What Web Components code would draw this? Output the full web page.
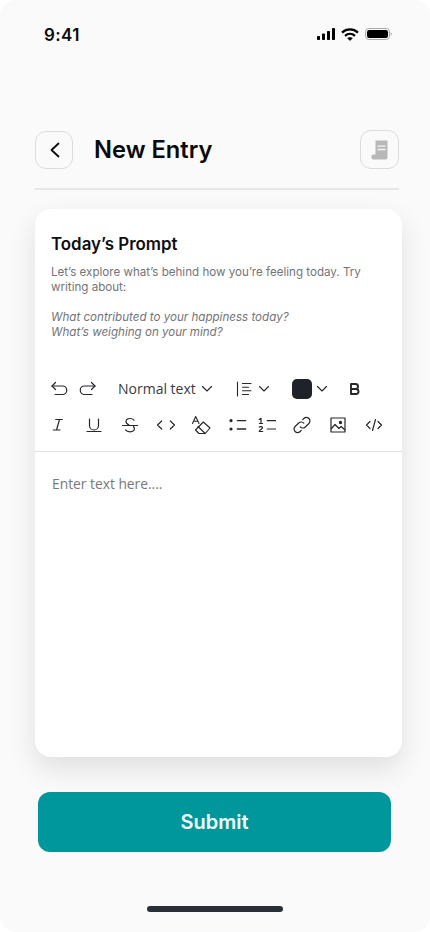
<!DOCTYPE html>
<html>
<head>
<meta charset="utf-8">
<title>New Entry</title>
<style>
  html, body { margin: 0; background: #fff; }
  body { width: 430px; height: 932px; overflow: hidden; font-family: Inter, "Liberation Sans", sans-serif; }
</style>
</head>
<body>
<entry-screen>
  <status-bar></status-bar>
  <entry-header title-text="New Entry"></entry-header>
  <entry-card></entry-card>
  <submit-button>Submit</submit-button>
  <home-bar></home-bar>
</entry-screen>

<script>
class entryScreen extends HTMLElement {
  constructor() {
    super();
    const shadowRoot = this.attachShadow({mode: 'open'});
    shadowRoot.innerHTML = `
      <style>
        :host { display: flex; flex-direction: column; width: 430px; height: 932px; box-sizing: border-box;
          background: #fafafa; border-radius: 16px; overflow: hidden; }
      </style>
      <slot></slot>`;
  }
}

class statusBar extends HTMLElement {
  constructor() {
    super();
    const shadowRoot = this.attachShadow({mode: 'open'});
    shadowRoot.innerHTML = `
      <style>
        :host { display: flex; justify-content: space-between; align-items: center; height: 20px;
          margin-top: 25px; padding: 0 38px 0 44px; }
        .time { font: 600 17px/20px Inter, sans-serif; color: #0b0b0c; letter-spacing: .4px; }
        .icons { display: flex; align-items: center; gap: 6px; margin-bottom: 2px; }
        svg { display: block; }
      </style>
      <span class="time">9:41</span>
      <div class="icons">
        <svg width="18" height="12" viewBox="0 0 18 12" fill="#000">
          <rect x="0" y="8" width="3" height="4" rx=".8"/><rect x="5" y="5.5" width="3" height="6.5" rx=".8"/>
          <rect x="10" y="3" width="3" height="9" rx=".8"/><rect x="15" y="0" width="3" height="12" rx=".8"/>
        </svg>
        <svg width="18" height="13" viewBox="0 0 18 13" fill="none" stroke="#000" stroke-width="2.2">
          <path d="M1 4.6C5.6 .4 12.4 .4 17 4.6"/><path d="M4 7.8c2.9-2.5 7.100-2.500 10 0"/>
          <path d="M9 12.400 6.600 10.300c1.400-1.100 3.400-1.100 4.800 0z" fill="#000" stroke-width="0.6"/>
        </svg>
        <svg width="27" height="12" viewBox="0 0 27 12">
          <rect x=".5" y=".5" width="24" height="11" rx="3.4" fill="none" stroke="#a9a9a9"/>
          <rect x="2" y="2" width="21" height="8" rx="2.200" fill="#000"/>
          <path d="M25.600 4.200c.8.300 1.200 1 1.200 1.800s-.4 1.500-1.200 1.800z" fill="#a9a9a9"/>
        </svg>
      </div>`;
  }
}

class entryHeader extends HTMLElement {
  constructor() {
    super();
    const shadowRoot = this.attachShadow({mode: 'open'});
    let titleText = this.getAttribute('title-text') ? this.getAttribute('title-text') : '';
    shadowRoot.innerHTML = `
      <style>
        :host { display: block; margin: 85px 31px 0 35px; }
        .row { display: flex; align-items: center; height: 39px; padding-bottom: 19px; border-bottom: 2px solid #e6e6e6; }
        .btn { width: 38px; height: 38px; box-sizing: border-box; border: 1px solid #dcdcdc; border-radius: 11px;
          display: flex; align-items: center; justify-content: center; flex: none; }
        h1 { flex: 1; margin: 0 0 0 21px; font: 600 23.7px/39px Inter, sans-serif; color: #0a0a0a; }
      </style>
      <div class="row">
        <div class="btn">
          <svg width="24" height="26" viewBox="0 0 24 26" fill="none" stroke="#0a0a0a" stroke-width="1.800" stroke-linecap="round" stroke-linejoin="round"><path d="M16.500 6.500 9.500 13l7 6.500"/></svg>
        </div>
        <h1>${titleText}</h1>
        <div class="btn" style="width:39px;height:39px">
          <svg width="24" height="24" viewBox="0 0 24 24">
            <path d="M7.500 2.500h12v17a2 2 0 0 1-2 2H5.500a2 2 0 0 1-2-2.500 2 2 0 0 1 2-2.500h2z" fill="#b8b8b8"/>
            <path d="M9.500 8.200h8M9.500 11.500h8" stroke="#f4f4f4" stroke-width="1.300"/>
          </svg>
        </div>
      </div>`;
  }
}

class promptBlock extends HTMLElement {
  constructor() {
    super();
    const shadowRoot = this.attachShadow({mode: 'open'});
    shadowRoot.innerHTML = `
      <style>
        :host { display: block; padding: 24px 16px 0; height: 146px; box-sizing: border-box; }
        h2 { margin: 0; font: 600 16.9px/22px Inter, sans-serif; color: #0e0e10; }
        p { margin: 10px 0 0; font: 400 11.6px/15px Inter, sans-serif; color: #737378; }
        p + p { margin-top: 15px; font-style: italic; }
      </style>
      <h2>Today’s Prompt</h2>
      <p>Let’s explore what’s behind how you’re feeling today. Try writing about:</p>
      <p>What contributed to your happiness today?<br>What’s weighing on your mind?</p>`;
  }
}

// toolbar icons all sit in a 20x20 box
const ic = (inner, sw) => `<svg width="20" height="20" viewBox="0 0 20 20" fill="none" stroke="#26272b" stroke-width="${sw || 1.2}" stroke-linecap="round" stroke-linejoin="round">${inner}</svg>`;
const chev = `<svg width="12" height="8" viewBox="0 0 12 8" fill="none" stroke="#26272b" stroke-width="1.100" stroke-linecap="round" stroke-linejoin="round"><path d="M1.500 1.500 6 6l4.500-4.500"/></svg>`;
const gap = (w) => `<span style="width:${w}px;flex:none"></span>`;

class editorToolbar extends HTMLElement {
  constructor() {
    super();
    const shadowRoot = this.attachShadow({mode: 'open'});
    shadowRoot.innerHTML = `
      <style>
        :host { display: block; height: 97px; box-sizing: border-box; padding-top: 24px; border-bottom: 1px solid #dedede; }
        .row { display: flex; align-items: center; height: 20px; padding-left: 14px; }
        .row + .row { margin-top: 16px; }
        svg { display: block; flex: none; }
        .label { font: 400 14px/20px "Open Sans", sans-serif; color: #3a3b40; width: 78px; white-space: nowrap; }
        .chip { width: 20px; height: 20px; border-radius: 5px; background: #20222a; flex: none; }
      </style>
      <div class="row">
        ${ic('<path d="M6.500 3.500 3 7l3.500 3.500"/><path d="M3 7h10.500a4.200 4.200 0 0 1 0 8.500H6"/>')}
        ${gap(9)}
        ${ic('<path d="M13.500 3.500 17 7l-3.500 3.500"/><path d="M17 7H6.500a4.200 4.200 0 0 0 0 8.500H14"/>')}
        ${gap(20)}
        <span class="label">Normal text</span>
        ${gap(5)}${chev}
        ${gap(21)}
        ${ic('<path d="M3.500 3v14M8.500 4.500h8.500M8.500 8.200h6M8.500 11.800h8.500M8.500 15.500h6"/>', 1.1)}
        ${gap(3.5)}${chev}
        ${gap(22)}
        <span class="chip"></span>
        ${gap(4)}${chev}
        ${gap(17.5)}
        ${ic('<path d="M6 5h4.500a2.500 2.500 0 0 1 0 5H6zM6 10h5a2.500 2.500 0 0 1 0 5H6z"/>', 1.9)}
      </div>
      <div class="row">
        ${ic('<path d="M6.700 4.500h6.600M4.300 15H11M10.500 4.500 7.500 15"/>')}
        ${gap(15)}
        ${ic('<path d="M5.500 4v6.500a4.500 4.500 0 0 0 9 0V4M3 16.500h14"/>')}
        ${gap(16)}
        ${ic('<path d="M14 5.200C13 4 11.700 3.500 10 3.500c-2.600 0-4 1.200-4 3 0 1.400.9 2.500 3 3.500M13.500 11.500c.6.600.9 1.300.9 2.100 0 1.900-1.700 3.200-4.400 3.200-2.100 0-3.500-.6-4.500-1.900M2.500 10.500h15"/>')}
        ${gap(16)}
        ${ic('<path d="M5.700 6 1.500 10l4.200 4M14.300 6l4.200 4-4.200 4"/>')}
        ${gap(15)}
        ${ic('<path d="M1.500 8.500 4.700 1.500 8 8.500M2.600 6.200h4.200"/><path d="M12.300 7 19 13l-4.800 5.500H8L4.500 15z"/><path d="M7 11.500l7.200 7"/>', 1.1)}
        ${gap(16)}
        <svg width="20" height="20" viewBox="0 0 20 20" fill="none" stroke="#26272b" stroke-width="1.300" stroke-linecap="round"><circle cx="4" cy="5.700" r="1.600" fill="#26272b" stroke="none"/><circle cx="4" cy="14" r="1.600" fill="#26272b" stroke="none"/><path d="M10.300 5.700h8.400M10.300 14h8.400"/></svg>
        ${gap(9)}
        <svg width="20" height="20" viewBox="0 0 20 20" fill="none" stroke="#26272b" stroke-width="1.200" stroke-linecap="round" stroke-linejoin="round"><path d="M3.200 4.500 5 3.300v5.200M3.400 8.500h3.200"/><path d="M3.300 12.200c.7-.9 3.200-.9 3.200.6 0 1.300-3.200 2.300-3.200 3.700h3.400"/><path d="M11.300 5.700h8.400M11.300 14h8.400"/></svg>
        ${gap(16)}
        ${ic('<path d="M8.200 11.800a3.500 3.500 0 0 0 5.100.2l3.600-3.500a3.500 3.500 0 0 0-5-5l-1.200 1.200"/><path d="M11.800 8.200a3.500 3.500 0 0 0-5.100-.2l-3.600 3.500a3.500 3.500 0 0 0 5 5l1.200-1.200"/>')}
        ${gap(16)}
        <svg width="20" height="20" viewBox="0 0 20 20" fill="none" stroke="#26272b" stroke-width="1.200" stroke-linejoin="round"><rect x="3" y="3" width="14" height="14"/><circle cx="12.500" cy="7.500" r="1.100" fill="#26272b"/><path d="M3 14l4-4.500 4 4 2.200-2 3.800 3.500"/></svg>
        ${gap(16)}
        ${ic('<path d="M6 6.500 2.500 10 6 13.500M14 6.500l3.500 3.500-3.500 3.500M11.500 4.500l-3 11"/>')}
      </div>`;
  }
}

class entryCard extends HTMLElement {
  constructor() {
    super();
    const shadowRoot = this.attachShadow({mode: 'open'});
    shadowRoot.innerHTML = `
      <style>
        :host { display: block; width: 367px; height: 548px; margin: 19px 0 0 35px; background: #fff; border-radius: 16px;
          box-shadow: 0 12px 28px rgba(0,0,0,.11); }
        .text { padding: 22px 17px; font: 400 13.8px/20px "Open Sans", sans-serif; color: #77787c; }
      </style>
      <prompt-block></prompt-block>
      <editor-toolbar></editor-toolbar>
      <div class="text">Enter text here....</div>`;
  }
}

class submitButton extends HTMLElement {
  constructor() {
    super();
    const shadowRoot = this.attachShadow({mode: 'open'});
    shadowRoot.innerHTML = `
      <style>
        :host { display: flex; align-items: center; justify-content: center; width: 353px; height: 60px; margin: 35px 0 0 38px;
          background: #00979c; border-radius: 12px; color: #f2fbfb; font: 600 20px/24px Inter, sans-serif; cursor: pointer; }
      </style>
      <slot></slot>`;
  }
}

class homeBar extends HTMLElement {
  constructor() {
    super();
    const shadowRoot = this.attachShadow({mode: 'open'});
    shadowRoot.innerHTML = `
      <style>
        :host { display: block; width: 136px; height: 6px; margin: 54px 0 0 147px; background: #2a2e36; border-radius: 3px; }
      </style>`;
  }
}

customElements.define('prompt-block', promptBlock)
customElements.define('editor-toolbar', editorToolbar)
customElements.define('entry-screen', entryScreen)
customElements.define('status-bar', statusBar)
customElements.define('entry-header', entryHeader)
customElements.define('entry-card', entryCard)
customElements.define('submit-button', submitButton)
customElements.define('home-bar', homeBar)
</script>
</body>
</html>
